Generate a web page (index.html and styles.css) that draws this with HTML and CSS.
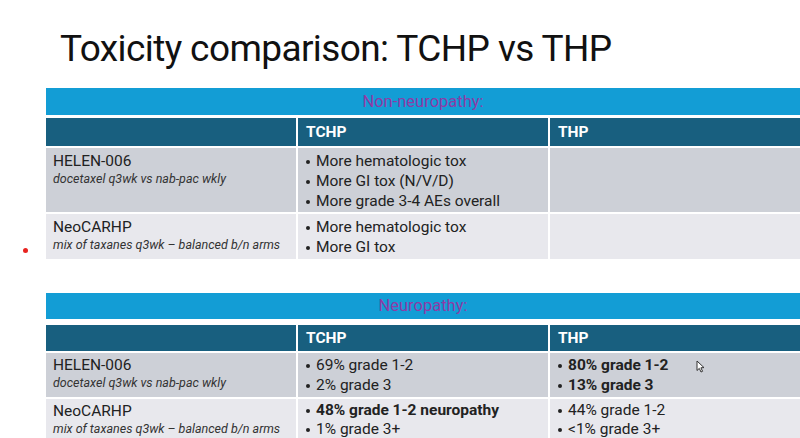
FILE: index.html
```html
<!DOCTYPE html>
<html>
<head>
<meta charset="utf-8">
<link rel="stylesheet" href="styles.css">
</head>
<body>
<div class="slide">
  <h1 class="title">Toxicity comparison: TCHP vs THP</h1>

  <div class="tbl tbl-first">
    <div class="banner">Non-neuropathy:</div>
    <div class="hd"></div>
    <div class="hd">TCHP</div>
    <div class="hd">THP</div>

    <div class="cell r1 study">
      <div class="name">HELEN-006</div>
      <div class="sub">docetaxel q3wk vs nab-pac wkly</div>
    </div>
    <div class="cell r1">
      <ul class="bl">
        <li>More hematologic tox</li>
        <li>More GI tox (N/V/D)</li>
        <li>More grade 3-4 AEs overall</li>
      </ul>
    </div>
    <div class="cell r1"></div>

    <div class="cell r2 study">
      <div class="name">NeoCARHP</div>
      <div class="sub">mix of taxanes q3wk – balanced b/n arms</div>
    </div>
    <div class="cell r2">
      <ul class="bl">
        <li>More hematologic tox</li>
        <li>More GI tox</li>
      </ul>
    </div>
    <div class="cell r2"></div>
  </div>

  <div class="tbl tbl-second">
    <div class="banner">Neuropathy:</div>
    <div class="hd"></div>
    <div class="hd">TCHP</div>
    <div class="hd">THP</div>

    <div class="cell r1b study">
      <div class="name">HELEN-006</div>
      <div class="sub">docetaxel q3wk vs nab-pac wkly</div>
    </div>
    <div class="cell r1b">
      <ul class="bl">
        <li>69% grade 1-2</li>
        <li>2% grade 3</li>
      </ul>
    </div>
    <div class="cell r1b cursor-host">
      <ul class="bl strong">
        <li>80% grade 1-2</li>
        <li>13% grade 3</li>
      </ul>
      <svg class="cursor" width="9" height="13" viewBox="0 0 9 13"><path d="M1 1 L1 10.5 L3.3 8.4 L5 12 L6.6 11.3 L4.9 7.8 L8 7.6 Z" fill="#fff" stroke="#333" stroke-width="1" stroke-linejoin="round"/></svg>
    </div>

    <div class="cell r2 study">
      <div class="name">NeoCARHP</div>
      <div class="sub">mix of taxanes q3wk – balanced b/n arms</div>
    </div>
    <div class="cell r2">
      <ul class="bl">
        <li class="b">48% grade 1-2 neuropathy</li>
        <li>1% grade 3+</li>
      </ul>
    </div>
    <div class="cell r2">
      <ul class="bl">
        <li>44% grade 1-2</li>
        <li>&lt;1% grade 3+</li>
      </ul>
    </div>
  </div>

  <span class="dot"></span>
</div>
</body>
</html>
```

FILE: styles.css
```css
html, body {
  margin: 0;
  padding: 0;
  background: #ffffff;
}

.slide {
  position: relative;
  width: 800px;
  height: 438px;
  overflow: hidden;
  background: #ffffff;
  font-family: "Roboto", "Liberation Sans", sans-serif;
  color: #222;
}

.title {
  margin: 0;
  padding: 27px 0 0 60px;
  height: 61px;
  box-sizing: border-box;
  font-family: "Roboto", "Liberation Sans", sans-serif;
  font-weight: 400;
  font-size: 37px;
  line-height: 44px;
  letter-spacing: -0.6px;
  color: #111;
}

.tbl {
  display: grid;
  grid-template-columns: 250px 250px 1fr;
  column-gap: 2px;
  margin-left: 46px;
  width: 754px;
}

.tbl-first {
  margin-top: 27px;
}

.tbl-second {
  margin-top: 32px;
}

.banner {
  grid-column: 1 / -1;
  height: 27px;
  background: #139dd5;
  color: #8e3ba6;
  font-size: 16.5px;
  line-height: 27px;
  text-align: center;
  margin-bottom: 3px;
}

.tbl-second .banner {
  height: 26px;
  line-height: 26px;
  margin-bottom: 6px;
}

.hd {
  height: 28px;
  background: #185f7f;
  color: #ffffff;
  font-weight: 700;
  font-size: 15.5px;
  line-height: 28px;
  padding-left: 8px;
  margin-bottom: 2px;
}

.tbl-second .hd {
  height: 26px;
  line-height: 26px;
}

.cell {
  padding: 3px 0 0 7px;
  box-sizing: border-box;
  margin-bottom: 2px;
}

.tbl-second .cell {
  padding-top: 2px;
}

.r1 {
  background: #cdd0d7;
  height: 64px;
}

.r1b {
  background: #cdd0d7;
  height: 44px;
}

.r2 {
  background: #e8e8ed;
  height: 45px;
}

.name {
  font-size: 15.5px;
  line-height: 20px;
  color: #222;
}

.sub {
  font-size: 12.5px;
  line-height: 16px;
  font-style: italic;
  color: #333;
}

.bl {
  list-style: none;
  margin: 0;
  padding: 0;
}

.bl li {
  font-size: 15.5px;
  line-height: 20px;
  color: #222;
  white-space: nowrap;
  display: flex;
  align-items: center;
}

.tbl-second .r2 .bl li {
  line-height: 19px;
}

.bl li::before {
  content: "";
  display: block;
  width: 4px;
  height: 4px;
  border-radius: 50%;
  background: #222;
  margin: 1px 6px 0 1px;
  flex: none;
}

.bl li.b,
.strong li {
  font-weight: 700;
}

.cursor-host {
  position: relative;
}

.cursor {
  position: absolute;
  left: 146px;
  top: 7px;
}

.dot {
  position: absolute;
  left: 23px;
  top: 248px;
  width: 5px;
  height: 5px;
  border-radius: 50%;
  background: #e8231f;
}
```
